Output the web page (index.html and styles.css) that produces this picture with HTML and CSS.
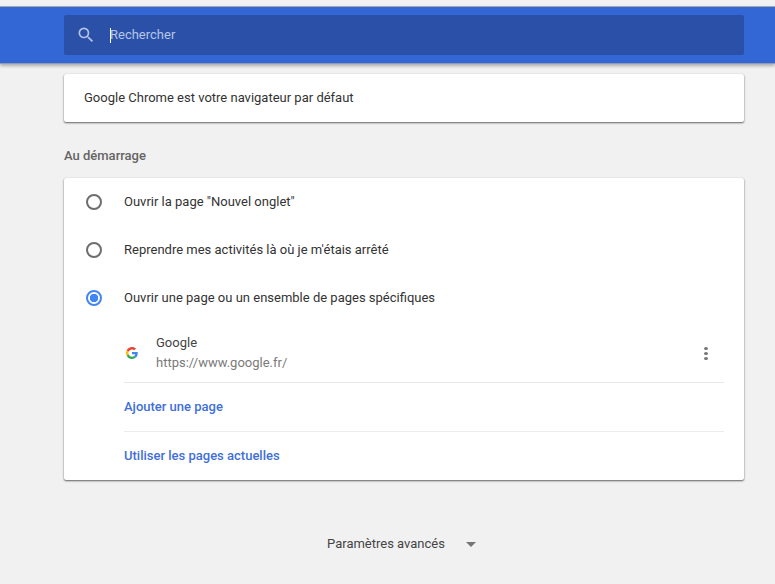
FILE: index.html
```html
<!DOCTYPE html>
<html lang="fr">
<head>
<meta charset="utf-8">
<title>Paramètres</title>
<link rel="stylesheet" href="styles.css">
</head>
<body>
<header class="toolbar">
  <div class="search">
    <svg class="search-icon" viewBox="0 0 24 24" width="20" height="20"><path fill="#b3c3e6" d="M15.5 14h-.79l-.28-.27A6.47 6.47 0 0 0 16 9.5 6.5 6.5 0 1 0 9.5 16c1.61 0 3.09-.59 4.23-1.57l.27.28v.79l5 4.99L20.49 19l-4.99-5zm-6 0C7.01 14 5 11.99 5 9.5S7.01 5 9.5 5 14 7.01 14 9.5 11.99 14 9.5 14z"/></svg>
    <span class="caret"></span>
    <span class="placeholder">Rechercher</span>
  </div>
</header>
<main class="page">
  <section class="card default-card">Google Chrome est votre navigateur par défaut</section>
  <h2 class="section-title">Au démarrage</h2>
  <section class="card">
    <div class="radio-row"><span class="radio"></span><span class="row-label">Ouvrir la page "Nouvel onglet"</span></div>
    <div class="radio-row"><span class="radio"></span><span class="row-label">Reprendre mes activités là où je m'étais arrêté</span></div>
    <div class="radio-row"><span class="radio checked"></span><span class="row-label">Ouvrir une page ou un ensemble de pages spécifiques</span></div>
    <div class="sublist">
      <div class="site">
        <svg class="favicon" viewBox="0 0 48 48" width="12" height="12">
          <path fill="#EA4335" d="M24 9.500c3.500 0 6.700 1.200 9.200 3.600l6.900-6.900C35.900 2.400 30.500 0 24 0 14.600 0 6.500 5.400 2.600 13.200l8 6.200C12.500 13.700 17.800 9.500 24 9.500z"/>
          <path fill="#4285F4" d="M47 24.500c0-1.600-.1-3.100-.4-4.500H24v9h12.900c-.6 3-2.200 5.500-4.700 7.200l7.700 6C44.400 38.500 47 32 47 24.500z"/>
          <path fill="#FBBC05" d="M10.500 28.600c-.5-1.400-.8-3-.8-4.600s.3-3.200.8-4.600l-8-6.200C.9 16.500 0 20.100 0 24s.9 7.500 2.600 10.800l7.900-6.200z"/>
          <path fill="#34A853" d="M24 48c6.500 0 11.900-2.100 15.900-5.800l-7.700-6c-2.100 1.400-4.900 2.300-8.200 2.300-6.200 0-11.500-4.200-13.400-9.900l-8 6.200C6.500 42.600 14.600 48 24 48z"/>
        </svg>
        <div class="site-text">
          <div class="site-name">Google</div>
          <div class="site-url">https://www.google.fr/</div>
        </div>
        <span class="more"><i></i><i></i><i></i></span>
      </div>
      <div class="link-row">Ajouter une page</div>
      <div class="link-row">Utiliser les pages actuelles</div>
    </div>
  </section>
  <div class="advanced">
    <span>Paramètres avancés</span>
    <span class="arrow"></span>
  </div>
</main>
</body>
</html>
```
FILE: styles.css
```css
* { box-sizing: border-box; }
html, body { margin: 0; height: 100%; }
body {
  background: #f1f1f1;
  font-family: Roboto, "Liberation Sans", sans-serif;
  font-size: 13px;
  color: #333;
  overflow: hidden;
  padding-top: 6px;
}
.toolbar {
  height: 58px;
  background: #3367d6;
  border-top: 1px solid #a9a9a9;
  border-bottom: 1px solid #8f9bb5;
  box-shadow: 0 2px 3px rgba(0,0,0,.28);
  padding: 8px 31px 0 64px;
}
.search {
  height: 40px;
  background: #2a51a7;
  border-radius: 2px;
  display: flex;
  align-items: center;
  padding-left: 12px;
  color: #b3c3e6;
  font-size: 13px;
}
.search-icon { flex: none; }
.caret {
  width: 1px;
  height: 15px;
  background: #fff;
  margin-left: 14px;
}
.placeholder { color: #b6c5e8; margin-left: -1px; padding-bottom: 2px; }
.page { padding: 10px 31px 0 64px; }
.card {
  background: #fff;
  border-radius: 2px;
  box-shadow: 0 1px 2px rgba(0,0,0,.6), 0 0 1px rgba(0,0,0,.12);
}
.default-card {
  height: 48px;
  padding: 0 0 2px 20px;
  display: flex;
  align-items: center;
}
.section-title {
  margin: 26px 0 0;
  height: 30px;
  font-size: 13px;
  font-weight: 500;
  color: #646464;
  line-height: 15px;
}
.radio-row {
  height: 48px;
  display: flex;
  align-items: center;
  padding-left: 22px;
  gap: 22px;
}
.row-label { padding-bottom: 2px; }
.radio {
  width: 16px;
  height: 16px;
  border: 2px solid #6e6e6e;
  border-radius: 50%;
  flex: none;
}
.radio.checked {
  border-color: #4285f4;
  background: radial-gradient(circle, #4285f4 0 4px, #fff 4.500px);
}
.sublist { margin: 0 20px 0 60px; }
.site {
  height: 61px;
  display: flex;
  align-items: center;
  padding-top: 2px;
  border-bottom: 1px solid #e8e8e8;
}
.favicon { flex: none; margin-right: 18px; margin-left: 2px; }
.site-text { flex: 1; line-height: 20px; }
.site-name { color: #444; }
.site-url { color: #7a7a7a; }
.more {
  display: flex;
  flex-direction: column;
  gap: 2px;
  margin-right: 16px;
}
.more i {
  display: block;
  width: 4px;
  height: 3px;
  border-radius: 50%;
  background: #757575;
}
.link-row {
  height: 49px;
  display: flex;
  align-items: center;
  padding-bottom: 2px;
  color: #3f6fd8;
  font-weight: 500;
  border-bottom: 1px solid #ececec;
}
.link-row:last-child { border-bottom: 0; height: 48px; }
.advanced {
  margin-top: 54px;
  display: flex;
  justify-content: center;
  align-items: center;
  gap: 21px;
  height: 18px;
  padding-right: 5px;
  color: #444;
}
.arrow {
  width: 0;
  height: 0;
  border-left: 5px solid transparent;
  border-right: 5px solid transparent;
  border-top: 5px solid #757575;
  margin-top: 2px;
}
```
